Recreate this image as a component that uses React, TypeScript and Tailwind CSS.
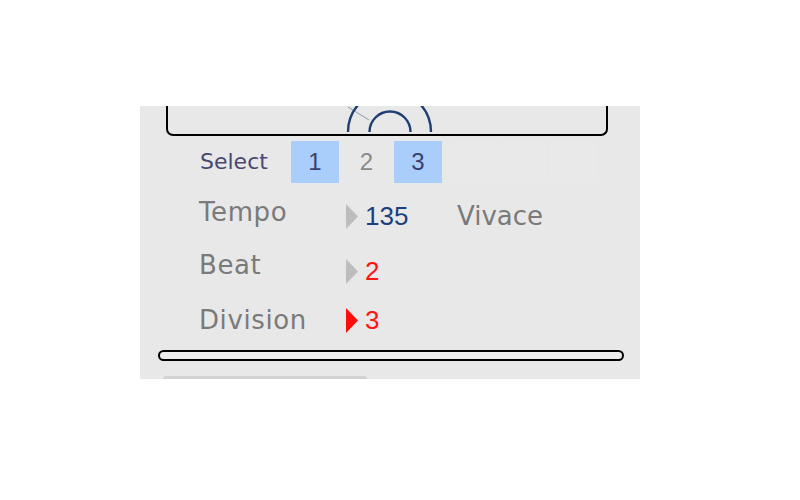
import React from 'react'

const LABEL = "font-['DejaVu_Sans',sans-serif]"
const DIGIT = "font-['Liberation_Sans',Arial,sans-serif]"

function Arrow({ active }: { active?: boolean }) {
  return (
    <svg width="13" height="25" viewBox="0 0 13 25" className="shrink-0">
      <path d="M0 0 L12 12.5 L0 25 Z" fill={active ? '#ff0d0d' : '#bdbdbd'} />
    </svg>
  )
}

function Row({
  label,
  value,
  valueColor,
  active,
  extra,
  className,
  labelShift,
}: {
  label: string
  value: string
  valueColor: string
  active?: boolean
  extra?: string
  className: string
  labelShift: string
}) {
  return (
    <div className={`flex items-center ${className}`}>
      <div className={`w-[147px] pl-[59px] box-content text-[26px] tracking-[0.6px] leading-none text-[#7a7a7a] ${LABEL} ${labelShift}`}>
        {label}
      </div>
      <Arrow active={active} />
      <div className={`ml-[6px] w-[92px] text-[26px] leading-none ${DIGIT} ${valueColor}`}>{value}</div>
      {extra && (
        <div className={`text-[26px] leading-none text-[#7a7a7a] ${LABEL}`}>{extra}</div>
      )}
    </div>
  )
}

export default function App() {
  return (
    <div className="w-[800px] h-[500px] bg-white overflow-hidden">
      <div className="ml-[140px] mt-[106px] w-[500px] h-[273px] bg-[#e8e8e8] overflow-hidden flex flex-col">
        {/* top display box, cut off above */}
        <div className="ml-[26px] w-[442px] h-[30px] shrink-0 border-x-2 border-b-2 border-black rounded-b-[7px]">
          <svg width="438" height="28" viewBox="0 0 438 28" className="block">
            <line x1="180" y1="1" x2="201" y2="14" stroke="#8d9bb0" strokeWidth="1" />
            <path d="M180 26 A41.5 41.5 0 0 1 263 26" fill="none" stroke="#1f3f73" strokeWidth="2.4" />
            <path d="M201.5 26 A20.5 20.5 0 0 1 242.5 26" fill="none" stroke="#1f3f73" strokeWidth="2.4" />
          </svg>
        </div>

        {/* select row */}
        <div className="mt-[5px] flex items-center h-[42px] shrink-0">
          <div className={`pl-[60px] w-[151px] text-[22px] leading-none text-[#4a4871] ${LABEL}`}>Select</div>
          <div className={`w-[48px] h-full flex items-center justify-center bg-[#a9cefc] text-[24px] leading-none text-[#3b3f6e] ${DIGIT}`}>
            1
          </div>
          <div className={`w-[55px] h-full flex items-center justify-center text-[24px] leading-none text-[#8a8a8a] ${DIGIT}`}>
            2
          </div>
          <div className={`w-[48px] h-full flex items-center justify-center bg-[#a9cefc] text-[24px] leading-none text-[#3b3f6e] ${DIGIT}`}>
            3
          </div>
          <div className="ml-[8px] flex h-full">
            <div className="w-[47px] bg-[#e9e9e9]" />
            <div className="w-[50px] bg-[#e9e9e9] border-l border-[#e7e7e7]" />
            <div className="w-[50px] bg-[#e9e9e9] border-l border-[#e7e7e7]" />
          </div>
        </div>

        <Row
          label="Tempo"
          value="135"
          valueColor="text-[#1c3f80]"
          extra="Vivace"
          className="mt-[8px] h-[50px] shrink-0"
          labelShift="pb-[9px]"
        />
        <Row
          label="Beat"
          value="2"
          valueColor="text-[#ff1414]"
          className="mt-[5px] h-[50px] shrink-0"
          labelShift="pb-[13px]"
        />
        <Row
          label="Division"
          value="3"
          valueColor="text-[#ff1414]"
          active
          className="h-[48px] shrink-0"
          labelShift="pb-[1px]"
        />

        {/* slider track */}
        <div className="mt-[6px] ml-[18px] w-[466px] h-[11px] shrink-0 rounded-full border-2 border-black bg-[#ececec]" />

        {/* lower tab, cut off */}
        <div className="mt-[15px] ml-[23px] w-[204px] grow rounded-t-[12px] bg-[#d2d2d2]" />
      </div>
    </div>
  )
}
